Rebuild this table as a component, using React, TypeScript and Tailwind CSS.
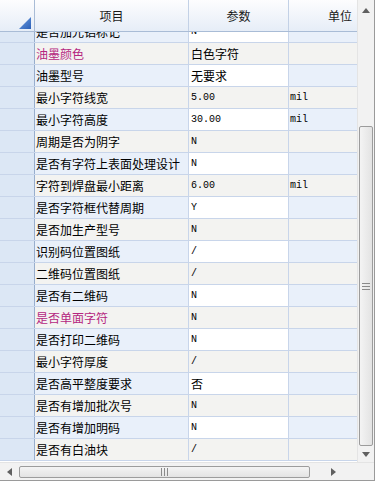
import React from "react";

type Row = { name: string; value: string; unit?: string; pink?: boolean };

const rows: Row[] = [
  { name: "是否加光铝标记", value: "N" },
  { name: "油墨颜色", value: "白色字符", pink: true },
  { name: "油墨型号", value: "无要求" },
  { name: "最小字符线宽", value: "5.00", unit: "mil" },
  { name: "最小字符高度", value: "30.00", unit: "mil" },
  { name: "周期是否为阴字", value: "N" },
  { name: "是否有字符上表面处理设计", value: "N" },
  { name: "字符到焊盘最小距离", value: "6.00", unit: "mil" },
  { name: "是否字符框代替周期", value: "Y" },
  { name: "是否加生产型号", value: "N" },
  { name: "识别码位置图纸", value: "/" },
  { name: "二维码位置图纸", value: "/" },
  { name: "是否有二维码", value: "N" },
  { name: "是否单面字符", value: "N", pink: true },
  { name: "是否打印二维码", value: "N" },
  { name: "最小字符厚度", value: "/" },
  { name: "是否高平整度要求", value: "否" },
  { name: "是否有增加批次号", value: "N" },
  { name: "是否有增加明码", value: "N" },
  { name: "是否有白油块", value: "/" },
];

const cjk = "font-['Noto_Sans_CJK_SC','Noto_Sans',sans-serif]";
const mono = "font-['Liberation_Mono',monospace]";

const isCJK = (s: string) => /[\u4e00-\u9fff]/.test(s);

export default function App() {
  return (
    <div className={`w-[375px] h-[481px] flex flex-col bg-white border-r border-b border-[#9a9a9a] overflow-hidden ${cjk}`}>
      <div className="flex h-[462px]">
        {/* grid */}
        <div className="w-[357px] flex flex-col overflow-hidden">
          {/* header */}
          <div className="flex h-[32px] shrink-0 bg-gradient-to-b from-[#fdfdfe] to-[#e6edf7] border-b border-[#a9bcd6] text-[12px] text-[#1a1a1a]">
            <div className="w-[35px] shrink-0 border-r border-[#a9bcd6] relative">
              <svg className="absolute right-[3px] bottom-[2px]" width="12" height="12" viewBox="0 0 12 12">
                <defs>
                  <linearGradient id="tri" x1="0" y1="0" x2="1" y2="1">
                    <stop offset="0" stopColor="#6f9fe0" />
                    <stop offset="1" stopColor="#2a5fb8" />
                  </linearGradient>
                </defs>
                <polygon points="12,0 12,12 0,12" fill="url(#tri)" />
              </svg>
            </div>
            <div className="w-[154px] shrink-0 border-r border-[#c3d1e6] flex items-center justify-center">项目</div>
            <div className="w-[100px] shrink-0 border-r border-[#c3d1e6] flex items-center justify-center">参数</div>
            <div className="flex-1 flex items-center justify-end pr-[5px]">单位</div>
          </div>
          {/* body */}
          <div className="flex-1 overflow-hidden">
            <div className="-mt-[11px]">
              {rows.map((r, i) => {
                const blue = i % 2 === 0;
                return (
                  <div key={i} className="flex h-[22px] border-b border-[#c8d5ea]">
                    <div className="w-[35px] shrink-0 bg-[#dce7f5] border-r border-[#98aecd]" />
                    <div
                      className={`w-[154px] shrink-0 border-r border-[#c8d5ea] flex items-center pl-[1px] text-[12px] whitespace-nowrap overflow-hidden ${
                        blue ? "bg-[#e9f0fa]" : "bg-[#f3f3f1]"
                      } ${r.pink ? "text-[#b5267f]" : "text-black"}`}
                    >
                      {r.name}
                    </div>
                    <div
                      className={`w-[100px] shrink-0 border-r border-[#c8d5ea] flex items-center pl-[2px] text-black ${
                        blue ? "bg-white" : "bg-[#f3f3f1]"
                      } ${isCJK(r.value) ? "text-[12px]" : `${mono} text-[10px]`}`}
                    >
                      {r.value}
                    </div>
                    <div
                      className={`flex-1 flex items-center pl-[1px] text-black ${mono} text-[10px] ${
                        blue ? "bg-[#e9f0fa]" : "bg-[#f3f3f1]"
                      }`}
                    >
                      {r.unit ?? ""}
                    </div>
                  </div>
                );
              })}
            </div>
          </div>
        </div>
        {/* vertical scrollbar */}
        <div className="w-[17px] flex flex-col bg-[#f2f2f2] border-l border-[#e4e4e4]">
          <div className="h-[20px] flex items-center justify-center">
            <svg width="8" height="5" viewBox="0 0 8 5">
              <polygon points="4,0 8,5 0,5" fill="#606060" />
            </svg>
          </div>
          <div className="h-[106px]" />
          <div className="h-[320px] mx-[1px] rounded-[2px] border border-[#9c9c9c] bg-gradient-to-r from-[#f4f4f4] to-[#e3e3e3] flex items-center justify-center">
            <svg width="8" height="7" viewBox="0 0 8 7">
              <rect x="0" y="0" width="8" height="1" fill="#8a8a8a" />
              <rect x="0" y="3" width="8" height="1" fill="#8a8a8a" />
              <rect x="0" y="6" width="8" height="1" fill="#8a8a8a" />
            </svg>
          </div>
          <div className="flex-1 flex items-center justify-center">
            <svg width="8" height="5" viewBox="0 0 8 5">
              <polygon points="0,0 8,0 4,5" fill="#606060" />
            </svg>
          </div>
        </div>
      </div>
      {/* horizontal scrollbar */}
      <div className="flex flex-1 bg-[#f2f2f2] border-t border-[#e4e4e4]">
        <div className="w-[357px] flex items-center">
          <div className="w-[19px] flex items-center justify-center">
            <svg width="5" height="8" viewBox="0 0 5 8">
              <polygon points="5,0 5,8 0,4" fill="#606060" />
            </svg>
          </div>
          <div className="w-[291px] h-[12px] rounded-[2px] border border-[#9c9c9c] bg-gradient-to-b from-[#f4f4f4] to-[#e3e3e3] flex items-center justify-center">
            <svg width="7" height="8" viewBox="0 0 7 8">
              <rect x="0" y="0" width="1" height="8" fill="#8a8a8a" />
              <rect x="3" y="0" width="1" height="8" fill="#8a8a8a" />
              <rect x="6" y="0" width="1" height="8" fill="#8a8a8a" />
            </svg>
          </div>
          <div className="flex-1 flex items-center justify-center">
            <svg width="5" height="8" viewBox="0 0 5 8">
              <polygon points="0,0 5,4 0,8" fill="#606060" />
            </svg>
          </div>
        </div>
        <div className="flex-1 bg-[#f2f2f2]" />
      </div>
    </div>
  );
}
